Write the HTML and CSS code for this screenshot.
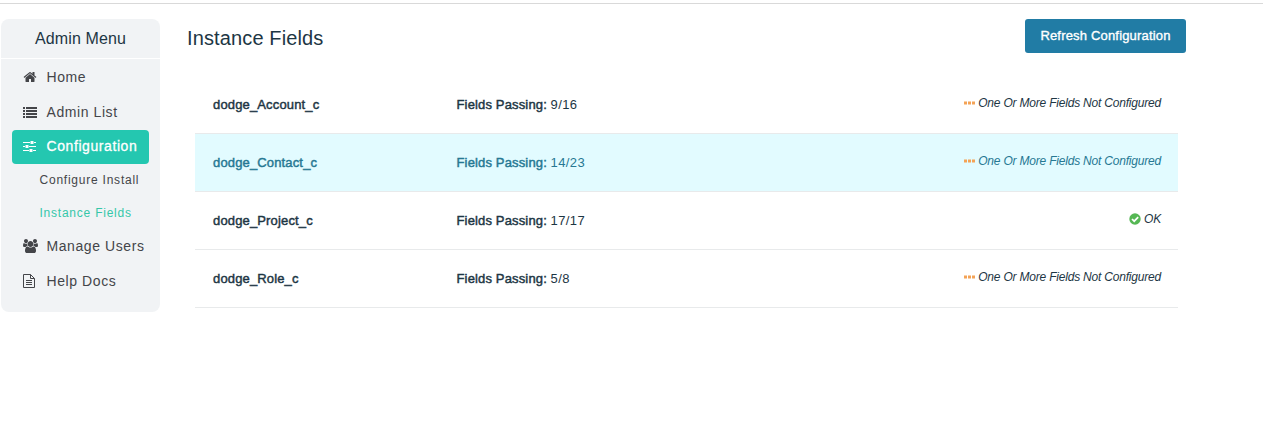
FILE: index.html
```html
<!DOCTYPE html>
<html lang="en">
<head>
<meta charset="utf-8">
<title>Instance Fields</title>
<link rel="stylesheet" href="styles.css">
</head>
<body>
<div class="topline"></div>
<div class="layout">
  <nav class="sidebar">
    <h2 class="menu-title">Admin Menu</h2>
    <ul class="menu">
      <li class="item"><svg class="icon" viewBox="0 0 1792 1792"><path d="M1472 992v480q0 26-19 45t-45 19h-384v-384h-256v384h-384q-26 0-45-19t-19-45v-480q0-1 .5-3t.5-3l575-474 575 474q1 2 1 6zm223-69l-62 74q-8 9-21 11h-3q-13 0-21-7l-692-577-692 577q-12 8-24 7-13-2-21-11l-62-74q-8-10-7-23.500t11-21.500l719-599q32-26 76-26t76 26l244 204v-195q0-14 9-23t23-9h192q14 0 23 9t9 23v408l219 182q10 8 11 21.500t-7 23.500z"/></svg><span>Home</span></li>
      <li class="item"><svg class="icon" viewBox="0 0 14 14"><path d="M0 2h2v2H0zM0 5h2v2H0zM0 8h2v2H0zM0 11h2v2H0zM3 2h11v2H3zM3 5h11v2H3zM3 8h11v2H3zM3 11h11v2H3z"/></svg><span>Admin List</span></li>
      <li class="item active"><svg class="icon" viewBox="0 0 14 14"><path d="M0 3h7v1H0zM11 3h2v1h-2zM7.500 2h3v3h-3zM0 7h2v1H0zM6 7h7v1H6zM2.500 6h3v3h-3zM0 11h6v1H0zM10 11h3v1h-3zM6.500 10h3v3h-3z"/></svg><span>Configuration</span></li>
      <li class="sub">Configure Install</li>
      <li class="sub current">Instance Fields</li>
      <li class="item"><svg class="icon users" viewBox="0 0 1920 1792"><path d="M593 896q-162 5-265 128h-134q-82 0-138-40.500t-56-118.500q0-353 124-353 6 0 43.500 21t97.500 42.500 119 21.500q67 0 133-23-5 37-5 66 0 139 81 256zm1071 637q0 120-73 189.500t-194 69.500h-874q-121 0-194-69.500t-73-189.500q0-53 3.500-103.500t14-109 26.500-108.500 43-97.500 62-81 85.500-53.500 111.500-20q10 0 43 21.500t73 48 107 48 135 21.500 135-21.500 107-48 73-48 43-21.500q61 0 111.500 20t85.500 53.500 62 81 43 97.500 26.500 108.500 14 109 3.500 103.500zm-1024-1277q0 106-75 181t-181 75-181-75-75-181 75-181 181-75 181 75 75 181zm704 384q0 159-112.500 271.500t-271.500 112.500-271.500-112.500-112.500-271.500 112.500-271.500 271.500-112.500 271.500 112.500 112.500 271.500zm576 225q0 78-56 118.500t-138 40.500h-134q-103-123-265-128 81-117 81-256 0-29-5-66 66 23 133 23 59 0 119-21.500t97.500-42.500 43.500-21q124 0 124 353zm-128-609q0 106-75 181t-181 75-181-75-75-181 75-181 181-75 181 75 75 181z"/></svg><span>Manage Users</span></li>
      <li class="item"><svg class="icon doc" viewBox="0 0 12 14"><path class="stroke" d="M.5.500h7l4 4v9H.5zM7.500.500v4h4M3 6.500h6M3 8.500h6M3 10.500h6"/></svg><span>Help Docs</span></li>
    </ul>
  </nav>
  <main class="main">
    <header class="head">
      <h1 class="title">Instance Fields</h1>
      <button class="refresh">Refresh Configuration</button>
    </header>
    <section class="rows">
      <div class="row">
        <div class="name">dodge_Account_c</div>
        <div class="passing"><span class="label">Fields Passing:</span> <span class="count">9/16</span></div>
        <div class="status"><svg class="dots" viewBox="0 0 11 4"><path d="M0 .5h3v3H0zM4 .5h3v3H4zM8 .5h3v3H8z"/></svg><em>One Or More Fields Not Configured</em></div>
      </div>
      <div class="row selected">
        <div class="name">dodge_Contact_c</div>
        <div class="passing"><span class="label">Fields Passing:</span> <span class="count">14/23</span></div>
        <div class="status"><svg class="dots" viewBox="0 0 11 4"><path d="M0 .5h3v3H0zM4 .5h3v3H4zM8 .5h3v3H8z"/></svg><em>One Or More Fields Not Configured</em></div>
      </div>
      <div class="row">
        <div class="name">dodge_Project_c</div>
        <div class="passing"><span class="label">Fields Passing:</span> <span class="count">17/17</span></div>
        <div class="status"><svg class="check" viewBox="0 0 12 12"><circle cx="6" cy="6" r="5.700"/><path d="M3 6l2.200 2.200L9.200 4.200"/></svg><em>OK</em></div>
      </div>
      <div class="row">
        <div class="name">dodge_Role_c</div>
        <div class="passing"><span class="label">Fields Passing:</span> <span class="count">5/8</span></div>
        <div class="status"><svg class="dots" viewBox="0 0 11 4"><path d="M0 .5h3v3H0zM4 .5h3v3H4zM8 .5h3v3H8z"/></svg><em>One Or More Fields Not Configured</em></div>
      </div>
    </section>
  </main>
</div>
</body>
</html>
```

FILE: styles.css
```css
* { box-sizing: border-box; }
body {
  margin: 0;
  padding-top: 3px;
  background: #fff;
  color: #1d3644;
  font-family: "Liberation Sans", Arial, sans-serif;
}
.topline { height: 1px; background: #d9d9d9; }
.layout { display: flex; align-items: flex-start; padding: 15px 0 0 1px; }

.sidebar {
  width: 159px;
  height: 293px;
  background: #f1f3f5;
  border-radius: 8px;
}
.menu-title {
  margin: 0;
  height: 40px;
  border-bottom: 1px solid #fff;
  font-size: 16px;
  font-weight: 400;
  line-height: 39px;
  text-align: center;
  letter-spacing: .1px;
}
.menu {
  margin: 0;
  padding: 1px 11px 0;
  list-style: none;
  color: #444549;
  white-space: nowrap;
}
.item {
  display: flex;
  align-items: center;
  height: 34px;
  margin-bottom: 1px;
  padding-left: 11px;
  border-radius: 4px;
  font-size: 14px;
  letter-spacing: .58px;
}
.icon { width: 14px; height: 14px; margin-right: 9.500px; fill: currentColor; flex: none; }
.users { width: 15px; margin-right: 8.500px; }
.doc { width: 12px; margin-right: 11.500px; }
.stroke { fill: none; stroke: currentColor; }
.active {
  margin-bottom: 0;
  padding-bottom: 2px;
  background: #24c7b0;
  color: #fff;
  -webkit-text-stroke: .3px currentColor;
}
.sub {
  height: 33px;
  padding-left: 27.500px;
  font-size: 12px;
  line-height: 32px;
  letter-spacing: .77px;
}
.current { height: 32px; color: #35c7a9; }

.main { width: 999px; margin-left: 27px; }
.head { display: flex; justify-content: space-between; height: 57px; }
.title {
  margin: 0;
  font-size: 20px;
  font-weight: 400;
  line-height: 38px;
  letter-spacing: .13px;
}
.refresh {
  width: 161px;
  height: 34px;
  padding: 0 0 2px;
  border: 0;
  border-radius: 3px;
  background: #217ca5;
  color: #fff;
  font: 13px "Liberation Sans", Arial, sans-serif;
  letter-spacing: .18px;
  -webkit-text-stroke: .35px currentColor;
  white-space: nowrap;
}
.rows { width: 983px; margin-left: 8px; }
.row {
  display: grid;
  grid-template-columns: 243.500px 260px 1fr;
  align-items: center;
  height: 58px;
  padding: 0 17px 0 18px;
  border-bottom: 1px solid #e8eaeb;
  font-size: 13px;
  white-space: nowrap;
}
.selected { background: #e2fbff; color: #267893; }
.name, .label { -webkit-text-stroke: .45px currentColor; letter-spacing: .15px; }
.count { letter-spacing: .4px; }
.status {
  display: flex;
  align-items: center;
  justify-content: flex-end;
  padding-bottom: 4px;
  font-size: 12px;
  letter-spacing: -.2px;
}
.dots { width: 11px; height: 4px; margin-right: 3px; fill: #f4a356; }
.check { width: 12px; height: 12px; margin-right: 3px; fill: #55b754; }
.check path { fill: none; stroke: #fff; stroke-width: 1.700; }
```
